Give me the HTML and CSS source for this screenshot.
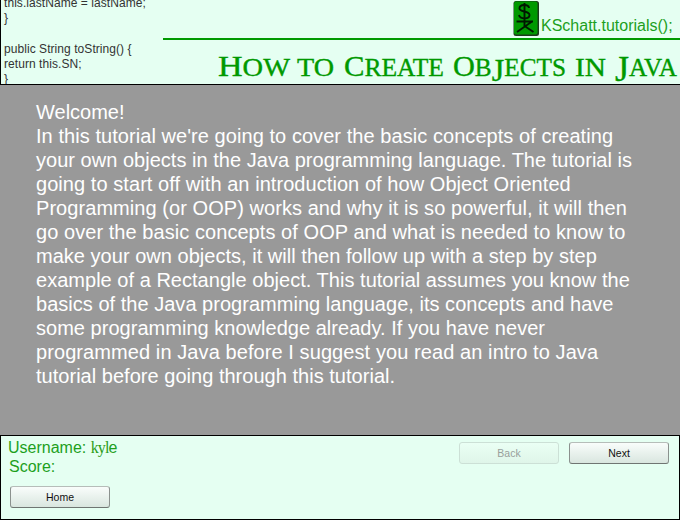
FILE: index.html
```
<!DOCTYPE html>
<html lang="en">
<head>
<meta charset="utf-8">
<title>How to Create Objects in Java</title>
<link rel="stylesheet" href="styles.css">
</head>
<body>
<div class="app">
  <header class="header">
    <pre class="code">this.lastName = lastName;
}

public String toString() {
return this.SN;
}</pre>
    <div class="masthead">
      <div class="brand">
        <svg class="logo" width="27" height="37" viewBox="0 0 27 37">
          <rect x="0.500" y="1" width="25.500" height="35" rx="2.500" fill="#1c3a1c"/>
          <rect x="1" y="1.500" width="23.500" height="33" rx="2" fill="#090"/>
          <g fill="none" stroke="#001800" stroke-width="1.900">
            <path d="M16 8C15.500 4 6.500 4 6.500 8.500C6.500 12.500 16.500 10.500 16.500 15C16.500 19.500 7 19.500 6 15"/>
            <path d="M11.500 3V27M3.500 21.500H20M19 21.500L4 32M11.500 26L20.500 32"/>
          </g>
        </svg>
        <span class="brand-name">KSchatt.tutorials();</span>
      </div>
      <svg class="title" width="489" height="43" viewBox="0 0 489 43" role="heading">
        <g class="title-text">
          <text x="27" y="35" textLength="72" lengthAdjust="spacingAndGlyphs">H<tspan class="sc">OW</tspan></text>
          <text class="sc" x="106" y="35" textLength="37" lengthAdjust="spacingAndGlyphs">TO</text>
          <text x="153" y="35" textLength="100" lengthAdjust="spacingAndGlyphs">C<tspan class="sc">REATE</tspan></text>
          <text x="262" y="35" textLength="113" lengthAdjust="spacingAndGlyphs">O<tspan class="sc">B</tspan><tspan class="small-j" dy="5">J</tspan><tspan class="sc" dy="-5">ECTS</tspan></text>
          <text class="sc" x="384" y="35" textLength="31" lengthAdjust="spacingAndGlyphs">IN</text>
          <text x="424" y="35" textLength="62" lengthAdjust="spacingAndGlyphs"><tspan class="big-j" dy="5">J</tspan><tspan class="sc" dy="-5">AVA</tspan></text>
        </g>
      </svg>
    </div>
  </header>
  <main class="content">
    <p>Welcome!<br>
<span class="loose">In this tutorial we're going to cover the basic concepts of creating</span><br>
<span class="slight">your own objects in the Java programming language. The tutorial is</span><br>
<span class="loose">going to start off with an introduction of how Object Oriented</span><br>
<span class="loose">Programming (or OOP) works and why it is so powerful, it will then</span><br>
<span class="loose">go over the basic concepts of OOP and what is needed to know to</span><br>
<span class="slight">make your own objects, it will then follow up with a step by step</span><br>
<span class="slight">example of a Rectangle object. This tutorial assumes you know the</span><br>
<span class="slight">basics of the Java programming language, its concepts and have</span><br>
<span class="slight">some programming knowledge already. If you have never</span><br>
<span class="loosest">programmed in Java before I suggest you read an intro to Java</span><br>
<span class="slight">tutorial before going through this tutorial.</span></p>
  </main>
  <footer class="footer">
    <div class="user">
      <div class="username">Username: <span class="name">kyl</span>e</div>
      <div class="score">Score:</div>
      <button class="btn home">Home</button>
    </div>
    <div class="nav">
      <button class="btn" disabled>Back</button>
      <button class="btn">Next</button>
    </div>
  </footer>
</div>
</body>
</html>
```
FILE: styles.css
```
* { box-sizing: border-box; }
body { margin: 0; font-family: "Liberation Sans", Arial, sans-serif; }
.app { width: 680px; height: 520px; display: flex; flex-direction: column; overflow: hidden; background: #999; }
.header { height: 85px; display: flex; background: #e5fff2; border-left: 1px solid #000; border-bottom: 1px solid #000; overflow: hidden; }
.code { width: 162px; flex: none; margin: -4px 0 0; padding-left: 3px; font: 12px/15.3px "Liberation Sans", Arial, sans-serif; color: #333; letter-spacing: 0.06px; }
.masthead { width: 517px; flex: none; background: linear-gradient(#090, #090) 0 38px / 100% 2px no-repeat; }
.brand { height: 41px; display: flex; padding-left: 350px; }
.logo { flex: none; }
.brand-name { margin: 17px 0 0 1px; font-size: 16px; line-height: 18px; color: #1da01d; white-space: nowrap; }
.title { display: block; margin-left: 28px; }
.title-text { font-family: "Liberation Serif", serif; font-size: 30px; fill: #090; stroke: #090; stroke-width: 0.35px; }
.sc { font-size: 25px; }
.small-j { font-size: 32px; }
.big-j { font-size: 36px; }
.content { height: 350px; padding: 15px 0 0 36px; color: #fff; }
.content p { margin: 0; font-size: 20px; line-height: 24px; white-space: nowrap; }
.slight { letter-spacing: 0.025px; }
.loose { letter-spacing: 0.06px; }
.loosest { letter-spacing: 0.085px; }
.footer { height: 85px; display: flex; justify-content: space-between; background: #e5fff2; border: 1px solid #000; }
.user { padding: 2px 0 0 7px; color: #1da01d; font-size: 16px; line-height: 19px; }
.name { font-family: "Liberation Serif", serif; color: #299b18; letter-spacing: -0.9px; }
.score { padding-left: 1px; }
.nav { display: flex; gap: 10px; padding: 6px 10px 0 0; }
.btn { width: 100px; height: 22px; padding: 0; border: 1px solid; border-color: #b6bdb9 #8b918e #6f7572; border-radius: 3px; background: linear-gradient(#f9fdfb, #d9e6df); font: 10.5px "Liberation Sans", Arial, sans-serif; color: #111; }
.btn:disabled { color: #999f9b; border-color: #cce0d6; background: linear-gradient(#eafff4, #dff5e9); }
.home { display: block; margin: 10px 0 0 2px; }
```
